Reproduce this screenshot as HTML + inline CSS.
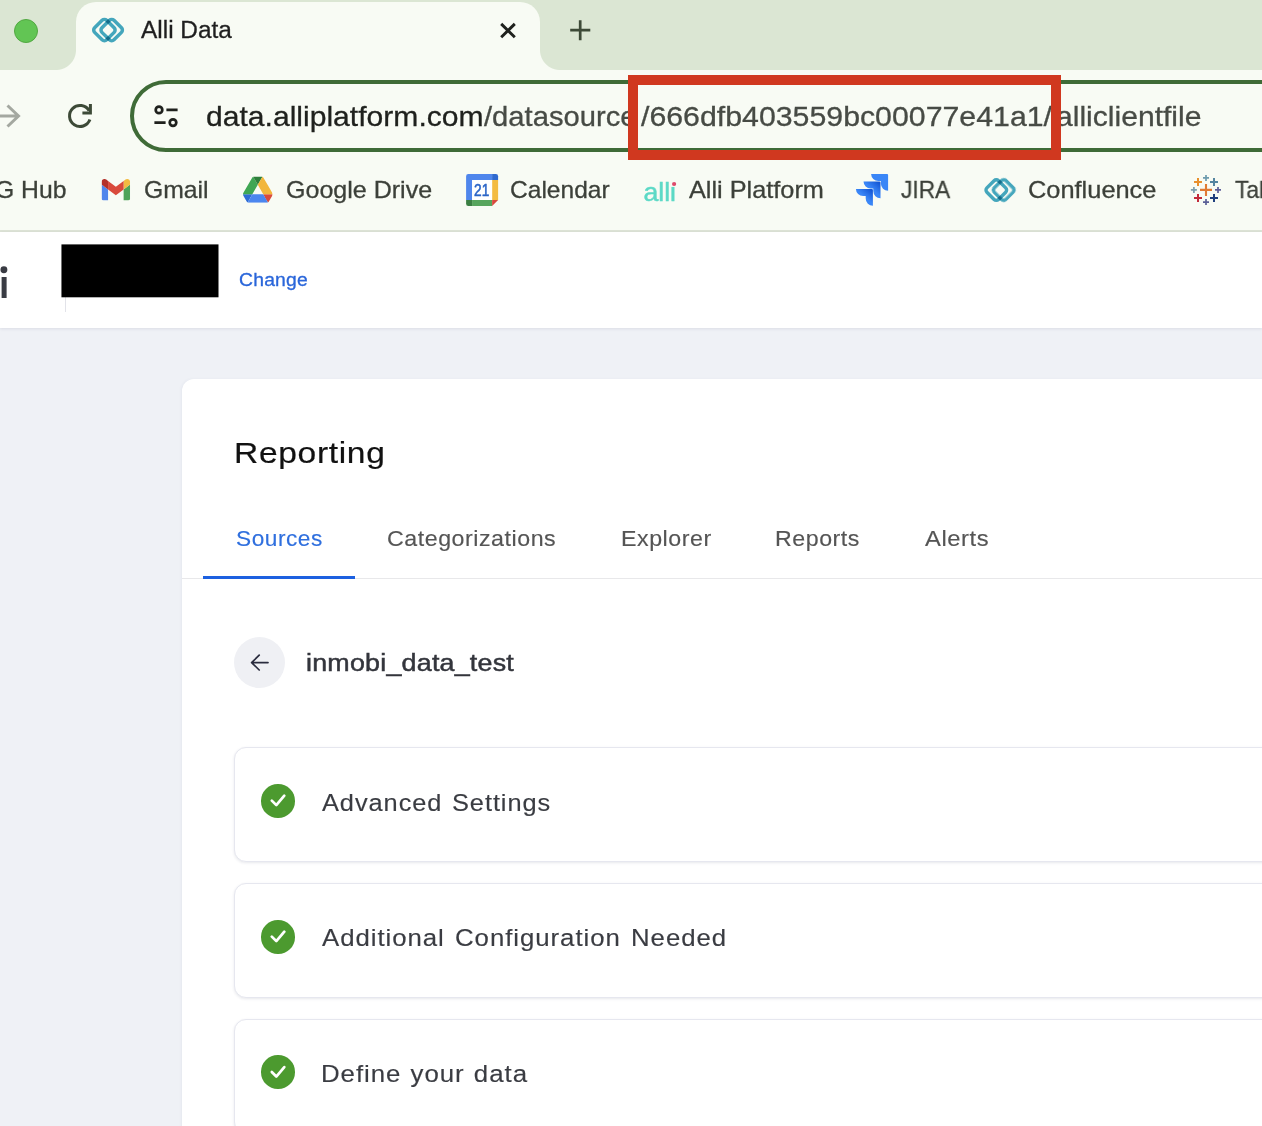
<!DOCTYPE html>
<html lang="en">
<head>
<meta charset="utf-8">
<title>Alli Data</title>
<style>
*{box-sizing:border-box;margin:0;padding:0}
html,body{width:1262px;height:1126px;overflow:hidden;background:#eff1f6}
body{position:relative;font-family:"Liberation Sans",Arial,sans-serif;color:#1f1f1f}
.abs{position:absolute}
.t{position:absolute;white-space:nowrap;line-height:1;transform-origin:0 0;will-change:transform}
/* browser chrome */
#tabstrip{left:0;top:0;width:1262px;height:70px;background:#dbe6d3}
#toolbar{left:0;top:70px;width:1262px;height:161px;background:#f8fbf4}
#chromeline{left:0;top:230px;width:1262px;height:2px;background:#dde3d6}
#tab{left:76px;top:2px;width:464px;height:68px;background:#f8fbf4;border-radius:20px 20px 0 0}
.curveL{left:56px;top:50px;width:20px;height:20px;background:radial-gradient(circle at 0 0,rgba(0,0,0,0) 19.5px,#f8fbf4 20.5px)}
.curveR{left:540px;top:50px;width:20px;height:20px;background:radial-gradient(circle at 100% 0,rgba(0,0,0,0) 19.5px,#f8fbf4 20.5px)}
#dot{left:14px;top:19px;width:24px;height:24px;border-radius:50%;background:#62c554;border:1px solid #52a842}
#omni{left:130px;top:80px;width:1200px;height:72px;border:4px solid #3f6b37;border-radius:36px;background:#f8fbf4}
#redbox{left:628px;top:75px;width:433px;height:85px;border:10px solid #d0381f}
.bm{font-size:24px;color:#3c4039;-webkit-text-stroke:.3px #3c4039}
/* page */
#header{left:0;top:232px;width:1262px;height:96px;background:#fff;box-shadow:0 1px 3px rgba(40,50,80,.10)}
#vline{left:65px;top:297px;width:1px;height:15px;background:#e2e3e9}
#card{left:182px;top:379px;width:1100px;height:800px;background:#fff;border-radius:12px 0 0 0;box-shadow:-1px 0 3px rgba(60,70,110,.05)}
#tabline{left:182px;top:578px;width:1080px;height:1px;background:#e8e8ea}
#tabsel{left:203px;top:576px;width:152px;height:3px;background:#1c60e0}
.nav{font-size:22px;color:#555;-webkit-text-stroke:.15px currentColor}
#back{left:234px;top:637px;width:51px;height:51px;border-radius:50%;background:#eff0f4}
.step{left:234px;width:1100px;height:115px;border:1px solid #e6e7ef;border-radius:12px;background:#fff;box-shadow:0 1px 3px rgba(40,50,80,.11)}
.chk{left:261.3px;width:33.6px;height:33.6px;border-radius:50%;background:#4c9a2f}
.stxt{font-size:24px;color:#3a3c42;-webkit-text-stroke:.15px #3a3c42}
</style>
</head>
<body>
<!-- ===== browser chrome ===== -->
<div class="abs" id="tabstrip"></div>
<div class="abs" id="toolbar"></div>
<div class="abs" id="chromeline"></div>
<div class="abs" id="tab"></div>
<div class="abs curveL"></div>
<div class="abs curveR"></div>
<div class="abs" id="dot"></div>

<div class="t" id="tabtitle" style="left:140.70px;top:19.00px;font-size:23.5px;transform:scaleX(1.0392);color:#1f1f1f;-webkit-text-stroke:.3px #1f1f1f">Alli Data</div>

<div class="abs" id="omni"></div>
<div class="t" id="urlA" style="left:206.24px;top:101.60px;font-size:28.5px;transform:scaleX(1.0557);color:#1f211d;-webkit-text-stroke:.3px #1f211d">data.alliplatform.com</div>
<div class="t" id="urlB" style="left:484.40px;top:101.60px;font-size:28.5px;transform:scaleX(1.0238);color:#474b45;-webkit-text-stroke:.3px #474b45">/datasource</div>
<div class="t" id="urlC" style="left:640.50px;top:101.60px;font-size:28.5px;transform:scaleX(1.0628);color:#474b45;-webkit-text-stroke:.3px #474b45">/666dfb403559bc00077e41a1/</div>
<div class="t" id="urlD" style="left:1056.44px;top:101.60px;font-size:28.5px;transform:scaleX(1.0555);color:#474b45;-webkit-text-stroke:.3px #474b45">alliclientfile</div>
<div class="abs" id="redbox"></div>

<!-- bookmarks -->
<div class="t bm" id="bm0" style="left:-4.59px;top:177.70px;font-size:24px;transform:scaleX(1.0300)">G Hub</div>
<div class="t bm" id="bm1" style="left:144.17px;top:177.70px;font-size:24px;transform:scaleX(1.0308)">Gmail</div>
<div class="t bm" id="bm2" style="left:286.06px;top:177.70px;font-size:24px;transform:scaleX(1.0431)">Google Drive</div>
<div class="t bm" id="bm3" style="left:510.18px;top:177.70px;font-size:24px;transform:scaleX(1.0228)">Calendar</div>
<div class="t bm" id="bm4" style="left:689.20px;top:177.70px;font-size:24px;transform:scaleX(1.0533)">Alli Platform</div>
<div class="t bm" id="bm5" style="left:901.20px;top:177.70px;font-size:24px;transform:scaleX(0.9462)">JIRA</div>
<div class="t bm" id="bm6" style="left:1027.94px;top:177.70px;font-size:24px;transform:scaleX(1.0577)">Confluence</div>
<div class="t bm" id="bm7" style="left:1234.80px;top:177.70px;font-size:24px;transform:scaleX(0.9492)">Tab</div>

<!-- ===== page ===== -->
<div class="abs" id="header"></div>
<div class="t" id="logo-i" style="left:-0.60px;top:266.20px;font-size:38.5px;font-weight:700;transform:scaleX(0.9500);color:#393b43">i</div>
<div class="abs" id="vline"></div>
<div class="t" id="change" style="left:238.80px;top:272.00px;font-size:17.5px;letter-spacing:0.2px;transform:scaleX(1.1045);color:#2a66da;-webkit-text-stroke:.3px #2a66da">Change</div>

<div class="abs" id="card"></div>
<div class="t" id="reporting" style="left:233.76px;top:438.10px;font-size:30px;letter-spacing:0.6px;transform:scaleX(1.1182);color:#111;-webkit-text-stroke:.2px #111">Reporting</div>

<div class="abs" id="tabline"></div>
<div class="abs" id="tabsel"></div>
<div class="t nav" id="n0" style="left:236.30px;top:529.10px;font-size:21.5px;letter-spacing:0.5px;transform:scaleX(1.0540);color:#2f6fde">Sources</div>
<div class="t nav" id="n1" style="left:386.72px;top:529.10px;font-size:21.5px;letter-spacing:0.5px;transform:scaleX(1.0787)">Categorizations</div>
<div class="t nav" id="n2" style="left:620.72px;top:529.10px;font-size:21.5px;letter-spacing:0.5px;transform:scaleX(1.0789)">Explorer</div>
<div class="t nav" id="n3" style="left:775.42px;top:529.10px;font-size:21.5px;letter-spacing:0.5px;transform:scaleX(1.0780)">Reports</div>
<div class="t nav" id="n4" style="left:925.00px;top:529.10px;font-size:21.5px;letter-spacing:0.5px;transform:scaleX(1.1057)">Alerts</div>

<div class="abs" id="back"></div>
<div class="t" id="srcname" style="left:305.71px;top:650.80px;font-size:24.6px;letter-spacing:0.2px;transform:scaleX(1.0919);color:#33353c;-webkit-text-stroke:.5px #33353c">inmobi_data_test</div>

<div class="abs step" style="top:747px"></div>
<div class="abs step" style="top:883px"></div>
<div class="abs step" style="top:1019px"></div>
<div class="abs chk" style="top:784.2px"></div>
<div class="abs chk" style="top:920.2px"></div>
<div class="abs chk" style="top:1055.2px"></div>
<div class="t stxt" id="s0" style="left:322.00px;top:791.00px;font-size:24.5px;letter-spacing:0.9px;word-spacing:1.5px;transform:scaleX(1.0366)">Advanced Settings</div>
<div class="t stxt" id="s1" style="left:322.00px;top:926.20px;font-size:24.5px;letter-spacing:0.9px;word-spacing:2.0px;transform:scaleX(1.0531)">Additional Configuration Needed</div>
<div class="t stxt" id="s2" style="left:321.49px;top:1062.00px;font-size:24.5px;letter-spacing:0.9px;word-spacing:1.0px;transform:scaleX(1.0550)">Define your data</div>
<svg class="abs" id="icons" style="left:0;top:0;will-change:transform" width="1262" height="1126" viewBox="0 0 1262 1126">
<defs>
<linearGradient id="jg" x1="0.95" y1="0.05" x2="0.55" y2="0.5"><stop offset="0.1" stop-color="#1558d6"/><stop offset="1" stop-color="#3a86f7"/></linearGradient>
</defs>
<!-- tab favicon -->
<g><rect x="-8.5" y="-8.5" width="17" height="17" rx="3.2" transform="translate(104.4,30.1) rotate(45)" fill="none" stroke="#44a6bc" stroke-width="3.5"/><rect x="-8.5" y="-8.5" width="17" height="17" rx="3.2" transform="translate(111.7,30.1) rotate(45)" fill="none" stroke="#44a6bc" stroke-width="3.5" style="mix-blend-mode:multiply"/></g>
<!-- tab close / new tab -->
<path d="M501.2,23.9L514.8,37.3M514.8,23.9L501.2,37.3" stroke="#1f211d" stroke-width="2.9" fill="none"/>
<path d="M570.2,30.2H590.3M580.2,20.2V40.2" stroke="#3d4a37" stroke-width="2.7" fill="none"/>
<!-- forward arrow -->
<path d="M0,116H18.5M7.5,105.5L18.5,116L7.5,126.5" stroke="#a4a8a0" stroke-width="3" fill="none"/>
<!-- reload -->
<path d="M89.1,110.7A10.5,10.5 0 1 0 89.9,119.6" stroke="#3d4a37" stroke-width="3" fill="none"/>
<path d="M90.4,104V113.1H82.4" stroke="#3d4a37" stroke-width="3" fill="none"/>
<!-- site info (tune) -->
<g stroke="#1f211d" stroke-width="2.7" fill="none"><circle cx="159" cy="109.9" r="3.3"/><path d="M166.4,109.9H177.6M154.4,122.6H165.6"/><circle cx="173" cy="122.6" r="3.3"/></g>
<!-- gmail -->
<svg x="101.6" y="179" width="28.5" height="21.4" viewBox="52 42 88 66" preserveAspectRatio="none">
<path fill="#4f86ec" d="M58 108h14V74L52 59v43c0 3.32 2.69 6 6 6"/>
<path fill="#4fa35a" d="M120 108h14c3.32 0 6-2.69 6-6V59l-20 15"/>
<path fill="#f3bb42" d="M120 48v26l20-15v-8c0-7.42-8.47-11.65-14.4-7.2"/>
<path fill="#d94a3c" d="M72 74V48l24 18 24-18v26L96 92"/>
<path fill="#b4312a" d="M52 51v8l20 15V48l-5.6-4.2c-5.94-4.45-14.4-.22-14.4 7.2"/>
</svg>
<!-- drive -->
<svg x="243" y="176.4" width="29.6" height="26.4" viewBox="0 0 87.3 78" preserveAspectRatio="none">
<path d="M6.6 66.85l3.85 6.65c.8 1.4 1.95 2.5 3.3 3.3l13.75-23.8H0c0 1.55.4 3.1 1.2 4.5z" fill="#2e6bd4"/>
<path d="M43.65 25L29.9 1.2c-1.35.8-2.5 1.9-3.3 3.3L1.2 48.5c-.8 1.4-1.2 2.95-1.2 4.5h27.5z" fill="#3fa653"/>
<path d="M73.55 76.8c1.35-.8 2.5-1.9 3.3-3.3l1.6-2.75 7.65-13.25c.8-1.4 1.2-2.95 1.2-4.5H59.798l5.852 11.5z" fill="#d94a3c"/>
<path d="M43.65 25L57.4 1.2C56.05.4 54.5 0 52.9 0H34.4c-1.6 0-3.15.45-4.5 1.2z" fill="#2e7f3b"/>
<path d="M59.8 53H27.5L13.75 76.8c1.35.8 2.9 1.2 4.5 1.2h50.8c1.6 0 3.15-.45 4.5-1.2z" fill="#4b86ef"/>
<path d="M73.4 26.5l-12.7-22c-.8-1.4-1.95-2.5-3.3-3.3L43.65 25 59.8 53h27.45c0-1.55-.4-3.1-1.2-4.5z" fill="#f2b63c"/>
</svg>
<!-- calendar -->
<g transform="translate(466.1,174)">
<path d="M2.2,0H26V6H6V26H0V2.2A2.2,2.2 0 0 1 2.2,0Z" fill="#4f86ec"/>
<path d="M26,0H29.8A2.2,2.2 0 0 1 32,2.2V6H26Z" fill="#2f69cf"/>
<rect x="26" y="6" width="6" height="20" fill="#f3bb42"/>
<rect x="6" y="26" width="20" height="6" fill="#57a55d"/>
<path d="M0,26H6V32H2.2A2.2,2.2 0 0 1 0,29.8Z" fill="#3b7f43"/>
<path d="M26,26H32L26,32Z" fill="#d9493d"/>
<rect x="6" y="6" width="20" height="20" fill="#fff"/>
<text x="15.6" y="22.3" text-anchor="middle" font-family="Liberation Sans, Arial, sans-serif" font-size="16.5" fill="#2b65c7" stroke="#2b65c7" stroke-width=".55" textLength="15.2" lengthAdjust="spacingAndGlyphs">21</text>
</g>
<!-- alli -->
<text x="643.4" y="200.5" font-family="Liberation Sans, Arial, sans-serif" font-size="26.5" fill="#5cd9c6" stroke="#5cd9c6" stroke-width=".5" textLength="32.6" lengthAdjust="spacingAndGlyphs">alli</text>
<rect x="671" y="177" width="7" height="9.8" fill="#f8fbf4"/>
<circle cx="674.1" cy="184" r="2.1" fill="#de4a6c"/>
<!-- jira -->
<g transform="translate(855.9,174)">
<path transform="translate(15.2,0)" d="M0,0H16a1,1 0 0 1 1,1V16.8A7.2,7.2 0 0 1 9.8,9.6V7H7.2A7.2,7.2 0 0 1 0,0Z" fill="#3a86f7"/>
<path transform="translate(7.6,7.5)" d="M0,0H16a1,1 0 0 1 1,1V16.8A7.2,7.2 0 0 1 9.8,9.6V7H7.2A7.2,7.2 0 0 1 0,0Z" fill="url(#jg)"/>
<path transform="translate(0,15)" d="M0,0H16a1,1 0 0 1 1,1V16.8A7.2,7.2 0 0 1 9.8,9.6V7H7.2A7.2,7.2 0 0 1 0,0Z" fill="url(#jg)"/>
</g>
<!-- confluence bookmark (same mark) -->
<g><rect x="-8.2" y="-8.2" width="16.4" height="16.4" rx="3.1" transform="translate(996.3,190.1) rotate(45)" fill="none" stroke="#44a6bc" stroke-width="3.4"/><rect x="-8.2" y="-8.2" width="16.4" height="16.4" rx="3.1" transform="translate(1003.7,190.1) rotate(45)" fill="none" stroke="#44a6bc" stroke-width="3.4" style="mix-blend-mode:multiply"/></g>
<!-- tableau -->
<path d="M1200,189.9H1212M1206,183.9V195.9" stroke="#e07a34" stroke-width="2.1" fill="none"/>
<path d="M1203,177.9H1209M1206,174.9V180.9" stroke="#6d9bad" stroke-width="1.7" fill="none"/>
<path d="M1203,202.1H1209M1206,199.1V205.1" stroke="#5a5f96" stroke-width="1.7" fill="none"/>
<path d="M1190.9,189.9H1196.9M1193.9,186.9V192.9" stroke="#7a9fae" stroke-width="1.7" fill="none"/>
<path d="M1215,189.9H1221M1218,186.9V192.9" stroke="#5d5e98" stroke-width="1.7" fill="none"/>
<path d="M1194,182H1202M1198,178V186" stroke="#e8902d" stroke-width="2" fill="none"/>
<path d="M1210,182H1218M1214,178V186" stroke="#5585a0" stroke-width="2" fill="none"/>
<path d="M1194,198H1202M1198,194V202" stroke="#c22b3b" stroke-width="2" fill="none"/>
<path d="M1210,198H1218M1214,194V202" stroke="#1f3f7d" stroke-width="2" fill="none"/>
<!-- redaction block + logo dot -->
<rect x="61.45" y="244.4" width="157.05" height="52.9" fill="#000"/>
<rect x="0" y="260" width="9" height="17" fill="#fff"/>
<circle cx="3.9" cy="269.7" r="3.45" fill="#393b43"/>
<!-- back arrow -->
<path d="M251.6,662.6H268M259.2,655.2L251.6,662.6L259.2,670" stroke="#2a2c3e" stroke-width="1.7" fill="none" stroke-linejoin="round" stroke-linecap="round"/>
<!-- check marks -->
<g stroke="#fff" stroke-width="2.7" fill="none" stroke-linecap="round" stroke-linejoin="round">
<path d="M271.8,800.6L276.3,805.1L284.3,795.7"/>
<path d="M271.8,936.6L276.3,941.1L284.3,931.7"/>
<path d="M271.8,1072L276.3,1076.5L284.3,1067.1"/>
</g>
</svg>
</body>
</html>
